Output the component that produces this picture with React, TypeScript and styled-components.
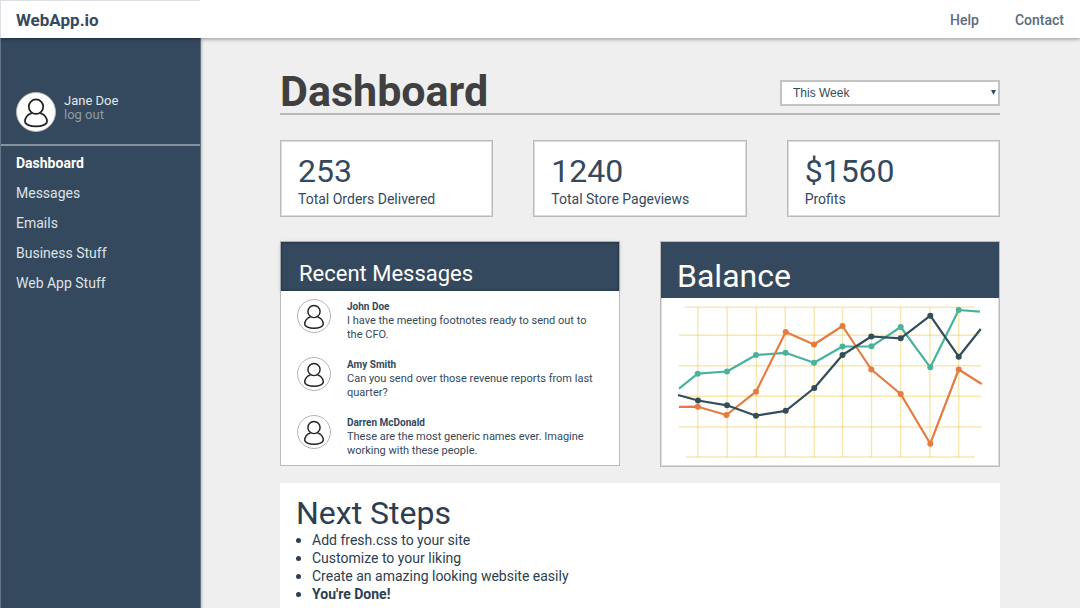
import React from "react";
import styled, { createGlobalStyle } from "styled-components";

const NAVY = "#34495e";

const GlobalStyle = createGlobalStyle`
  *, *::before, *::after { box-sizing: border-box; }
  body {
    margin: 0;
    background: #efefef;
    color: ${NAVY};
    font-family: Roboto, "Noto Sans", sans-serif;
    font-size: 14px;
    line-height: 18px;
  }
  h1, h2, h3, p, ul, dl, dt, dd { margin: 0; padding: 0; }
  a { color: inherit; text-decoration: none; }
`;

const Page = styled.div`
  display: flex;
  flex-direction: column;
  min-height: 100vh;
`;

const TopBar = styled.header`
  position: relative;
  z-index: 1;
  display: flex;
  justify-content: space-between;
  align-items: stretch;
  height: 38px;
  background: #fff;
  box-shadow: 0 1px 4px rgba(0, 0, 0, 0.4);
`;

const Brand = styled.a`
  width: 200px;
  padding: 9px 15px;
  border-top: 1px solid #dcdfe4;
  border-left: 1px solid #dcdfe4;
  font-size: 17px;
  font-weight: 700;
  line-height: 20px;
`;

const TopLinks = styled.nav`
  display: flex;
  align-items: center;
  gap: 36px;
  padding: 2px 16px 0 0;
  font-weight: 500;
  color: #5b6c7d;
`;

const Body = styled.div`
  display: flex;
  flex: 1;
`;

const Sidebar = styled.aside`
  flex: 0 0 201px;
  background: ${NAVY};
  border: 1px solid #647485;
  border-width: 0 1px;
  box-shadow: 0 0 3px rgba(0, 0, 0, 0.4);
`;

const Profile = styled.section`
  display: flex;
  gap: 8px;
  padding: 54px 15px 12px;
  border-bottom: 2px solid #8592a0;
`;

const ProfileText = styled.div`
  display: flex;
  flex-direction: column;
  padding-top: 2px;
  font-size: 13px;
  line-height: 14px;
  color: #e3e7ea;
`;

const LogOut = styled.a`
  color: #8f9ba7;
`;

const AvatarFrame = styled.span<{ $size: number }>`
  display: block;
  flex: none;
  width: ${(p) => p.$size}px;
  height: ${(p) => p.$size}px;
  border: 1px solid #b5b5b5;
  border-radius: 50%;
  background: #fff;
  svg { display: block; width: 100%; height: 100%; }
`;

const SideNav = styled.nav`
  display: flex;
  flex-direction: column;
  padding: 2px 15px;
`;

const SideLink = styled.a<{ $active?: boolean }>`
  line-height: 30px;
  font-weight: ${(p) => (p.$active ? 700 : 400)};
  color: ${(p) => (p.$active ? "#fff" : "#dfe3e7")};
`;

const Main = styled.main`
  display: flex;
  flex-direction: column;
  flex: 1;
  min-width: 0;
  padding: 29px 80px 0 79px;
`;

const TitleRow = styled.div`
  display: flex;
  justify-content: space-between;
  align-items: flex-end;
  padding-bottom: 7px;
  border-bottom: 2px solid #b8b8b8;
`;

const Title = styled.h1`
  height: 39px;
  font-size: 43px;
  line-height: 48px;
  font-weight: 700;
  color: #404040;
`;

const SelectWrap = styled.label`
  position: relative;
  display: block;
  width: 220px;
  svg {
    position: absolute;
    right: 4px;
    top: 10px;
    pointer-events: none;
  }
`;

const Select = styled.select`
  display: block;
  appearance: none;
  width: 100%;
  height: 26px;
  padding: 0 11px;
  border: 2px solid #c3c3c3;
  border-radius: 0;
  background: #fff;
  color: ${NAVY};
  font: 12px "Liberation Sans", Arial, sans-serif;
`;

const Card = styled.section`
  background: #fff;
  border: 1px solid #bbb;
  box-shadow: inset 0 0 0 1px #dcdcdc;
`;

const Stats = styled.dl`
  display: grid;
  grid-template-columns: repeat(3, 1fr);
  gap: 40px;
  margin-top: 25px;
`;

const Stat = styled(Card).attrs({ as: "div" })`
  display: flex;
  flex-direction: column-reverse;
  gap: 1px;
  padding: 12px 17px 8px;
`;

const StatValue = styled.dd`
  font-size: 32px;
  line-height: 36px;
`;

const Panels = styled.div`
  display: grid;
  grid-template-columns: repeat(2, 1fr);
  align-items: start;
  gap: 40px;
  margin-top: 24px;
`;

const PanelHead = styled.header<{ $large?: boolean }>`
  padding: ${(p) => (p.$large ? "16px 16px 4px" : "19px 18px 4px")};
  background: ${NAVY};
  color: #fff;
  box-shadow: ${(p) => (p.$large ? "none" : "0 1px 4px rgba(0,0,0,.25), inset 0 0 3px #16273a")};
  h2 {
    font-size: ${(p) => (p.$large ? 32 : 22)}px;
    line-height: ${(p) => (p.$large ? 36 : 26)}px;
    font-weight: 400;
  }
`;

const MessageList = styled.ul`
  position: relative;
  display: flex;
  flex-direction: column;
  gap: 15px;
  padding: 8px 16px 7px;
  background: #fff;
  list-style: none;
`;

const Message = styled.li`
  display: flex;
  gap: 16px;
  font-size: 11px;
  line-height: 14px;
  h3 { font-size: 10px; line-height: 14px; font-weight: 700; }
`;

const MessageBody = styled.div`
  flex: 1;
  min-width: 0;
  padding-top: 1px;
`;

const Chart = styled.svg`
  display: block;
  width: 100%;
  height: auto;
`;

const NextSteps = styled.section`
  flex: 1;
  margin-top: 16px;
  padding: 12px 16px 7px;
  background: #fff;
  color: #2c3e50;
  h2 { font-size: 32px; line-height: 36px; font-weight: 400; }
  ul { list-style: none; }
  li { display: flex; align-items: center; gap: 11px; }
  li::before {
    content: "";
    width: 5px;
    height: 5px;
    border-radius: 50%;
    background: currentColor;
  }
`;

const Person = () => (
  <svg viewBox="0 0 100 100" fill="none" stroke="#222" strokeWidth="4.5" aria-hidden="true">
    <circle cx="50" cy="36" r="19" />
    <path d="M39 53C28 55 21 66 21 75C21 83 35 88 50 88C65 88 79 83 79 75C79 66 72 55 61 53" />
  </svg>
);

const messages = [
  { name: "John Doe", text: "I have the meeting footnotes ready to send out to the CFO." },
  { name: "Amy Smith", text: "Can you send over those revenue reports from last quarter?" },
  { name: "Darren McDonald", text: "These are the most generic names ever. Imagine working with these people." },
];

const stats = [
  { value: "253", label: "Total Orders Delivered" },
  { value: "1240", label: "Total Store Pageviews" },
  { value: "$1560", label: "Profits" },
];

type Point = [number, number];

const series: { color: string; points: Point[] }[] = [
  {
    color: "#48b39d",
    points: [[17, 90.7], [35.7, 75.7], [65, 73.5], [94, 57], [123.5, 54.8], [152, 64.8], [180.5, 48.5], [209.5, 48.3], [238.7, 29], [268.3, 69.3], [296.7, 12], [318, 13.6]],
  },
  {
    color: "#e57b40",
    points: [[17, 108.8], [35.8, 108.7], [64.5, 117], [94, 93.7], [123.7, 34], [152, 46.5], [180.5, 28], [209.3, 71.5], [238.7, 96], [268.3, 145.7], [296.7, 71.5], [319.7, 86]],
  },
  {
    color: "#324d5c",
    points: [[16, 97], [36, 102.5], [65, 107.3], [94, 117.7], [123.7, 112.8], [152.3, 90], [180.5, 57], [209.3, 38.5], [238.7, 40.3], [268.3, 17.7], [296.7, 58.7], [318.7, 31]],
  },
];

const gridX = [35.8, 65.2, 94.3, 123.2, 152.3, 180.5, 209.5, 238.7, 268, 296.7];
const gridY: [number, number, number][] = [
  [9.3, 22.5, 313],
  [37.3, 17, 319],
  [67.8, 17, 319],
  [98.3, 17, 319],
  [129, 17, 319],
  [159, 24, 313],
];

const BalanceChart = () => (
  <Chart viewBox="-1 0 338 168" role="img" aria-label="Balance over time">
    <g stroke="#f0ca4d" strokeOpacity="0.45" strokeWidth="1.4">
      {gridX.map((x) => <line key={x} x1={x} x2={x} y1="9" y2="159" />)}
      {gridY.map(([y, x1, x2]) => <line key={y} x1={x1} x2={x2} y1={y} y2={y} />)}
    </g>
    {series.map(({ color, points }) => (
      <g key={color} fill={color}>
        <polyline points={points.map((p) => p.join(",")).join(" ")} fill="none" stroke={color} strokeWidth="2.2" strokeLinejoin="round" />
        {points.slice(1, -1).map(([x, y]) => <circle key={x} cx={x} cy={y} r="3" />)}
      </g>
    ))}
  </Chart>
);

export default function App() {
  return (
    <Page>
      <GlobalStyle />
      <TopBar>
        <Brand href="#">WebApp.io</Brand>
        <TopLinks>
          <a href="#help">Help</a>
          <a href="#contact">Contact</a>
        </TopLinks>
      </TopBar>
      <Body>
        <Sidebar>
          <Profile>
            <AvatarFrame $size={40}><Person /></AvatarFrame>
            <ProfileText>
              <span>Jane Doe</span>
              <LogOut href="#logout">log out</LogOut>
            </ProfileText>
          </Profile>
          <SideNav>
            <SideLink href="#dashboard" $active>Dashboard</SideLink>
            <SideLink href="#messages">Messages</SideLink>
            <SideLink href="#emails">Emails</SideLink>
            <SideLink href="#business">Business Stuff</SideLink>
            <SideLink href="#webapp">Web App Stuff</SideLink>
          </SideNav>
        </Sidebar>
        <Main>
          <TitleRow>
            <Title>Dashboard</Title>
            <SelectWrap>
              <Select aria-label="Period" defaultValue="week">
                <option value="week">This Week</option>
              </Select>
              <svg width="5" height="5" viewBox="0 0 5 5" aria-hidden="true">
                <path d="M0 0H5L2.500 5Z" fill={NAVY} />
              </svg>
            </SelectWrap>
          </TitleRow>
          <Stats>
            {stats.map((s) => (
              <Stat key={s.label}>
                <dt>{s.label}</dt>
                <StatValue>{s.value}</StatValue>
              </Stat>
            ))}
          </Stats>
          <Panels>
            <Card>
              <PanelHead><h2>Recent Messages</h2></PanelHead>
              <MessageList>
                {messages.map((m) => (
                  <Message key={m.name}>
                    <AvatarFrame $size={34}><Person /></AvatarFrame>
                    <MessageBody>
                      <h3>{m.name}</h3>
                      <p>{m.text}</p>
                    </MessageBody>
                  </Message>
                ))}
              </MessageList>
            </Card>
            <Card>
              <PanelHead $large><h2>Balance</h2></PanelHead>
              <BalanceChart />
            </Card>
          </Panels>
          <NextSteps>
            <h2>Next Steps</h2>
            <ul>
              <li>Add fresh.css to your site</li>
              <li>Customize to your liking</li>
              <li>Create an amazing looking website easily</li>
              <li><strong>You're Done!</strong></li>
            </ul>
          </NextSteps>
        </Main>
      </Body>
    </Page>
  );
}
